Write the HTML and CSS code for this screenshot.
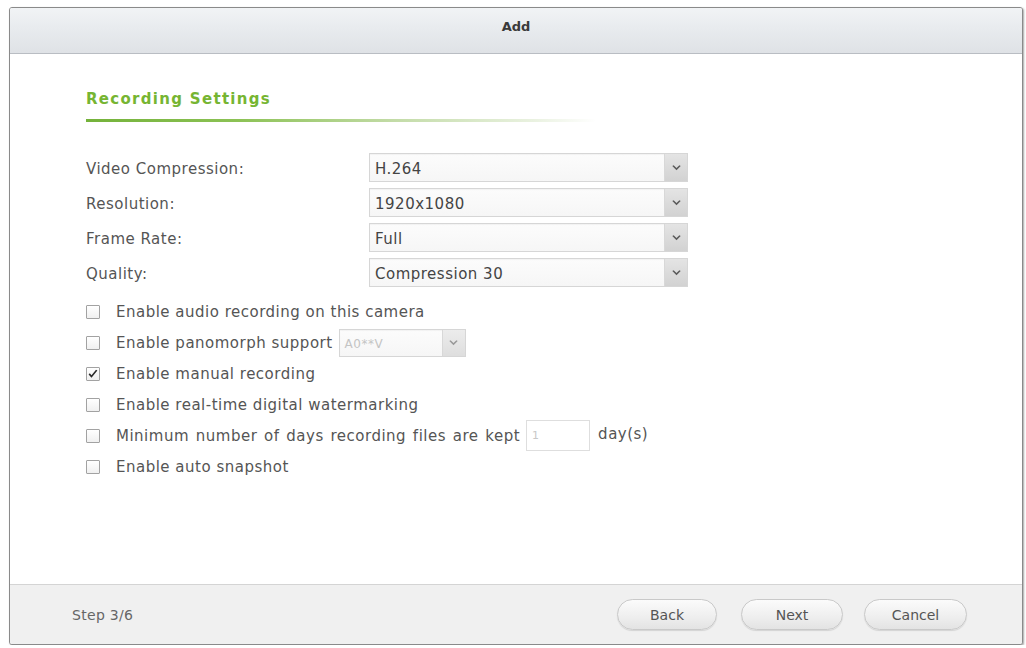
FILE: index.html
```html
<!DOCTYPE html>
<html>
<head>
<meta charset="utf-8">
<title>Add</title>
<link rel="stylesheet" href="styles.css">
</head>
<body>
<div class="dialog">
  <div class="header"><span class="title">Add</span></div>
  <div class="content">
    <div class="section-title">Recording Settings</div>
    <div class="section-line"></div>
    <div class="form">
      <div class="label">Video Compression:</div>
      <div class="select"><span class="value">H.264</span><span class="arrow"><svg width="9" height="6" viewBox="0 0 9 6"><path d="M0.3 1 L4.5 5.2 L8.7 1 L7.4 0.2 L4.5 3 L1.6 0.2 Z" fill="#5a5a5a"/></svg></span></div>
      <div class="label">Resolution:</div>
      <div class="select"><span class="value">1920x1080</span><span class="arrow"><svg width="9" height="6" viewBox="0 0 9 6"><path d="M0.3 1 L4.5 5.2 L8.7 1 L7.4 0.2 L4.5 3 L1.6 0.2 Z" fill="#5a5a5a"/></svg></span></div>
      <div class="label">Frame Rate:</div>
      <div class="select"><span class="value">Full</span><span class="arrow"><svg width="9" height="6" viewBox="0 0 9 6"><path d="M0.3 1 L4.5 5.2 L8.7 1 L7.4 0.2 L4.5 3 L1.6 0.2 Z" fill="#5a5a5a"/></svg></span></div>
      <div class="label">Quality:</div>
      <div class="select"><span class="value">Compression 30</span><span class="arrow"><svg width="9" height="6" viewBox="0 0 9 6"><path d="M0.3 1 L4.5 5.2 L8.7 1 L7.4 0.2 L4.5 3 L1.6 0.2 Z" fill="#5a5a5a"/></svg></span></div>
    </div>
    <div class="checks">
      <div class="check-row"><span class="box"></span><span class="ctext">Enable audio recording on this camera</span></div>
      <div class="check-row"><span class="box"></span><span class="ctext">Enable panomorph support</span>
        <div class="select small disabled"><span class="value">A0**V</span><span class="arrow"><svg width="9" height="6" viewBox="0 0 9 6"><path d="M0.3 1 L4.5 5.2 L8.7 1 L7.4 0.2 L4.5 3 L1.6 0.2 Z" fill="#999"/></svg></span></div>
      </div>
      <div class="check-row"><span class="box checked"><svg width="12" height="12" viewBox="0 0 12 12"><path d="M1.6 6.4 L4.5 9.8 L10.4 2.4 L9 1.8 L4.5 7.3 L2.8 5.2 Z" fill="#2a2a2a"/></svg></span><span class="ctext">Enable manual recording</span></div>
      <div class="check-row"><span class="box"></span><span class="ctext">Enable real-time digital watermarking</span></div>
      <div class="check-row"><span class="box"></span><span class="ctext wide">Minimum number of days recording files are kept</span><span class="days-input">1</span><span class="days">day(s)</span></div>
      <div class="check-row"><span class="box"></span><span class="ctext">Enable auto snapshot</span></div>
    </div>
  </div>
  <div class="footer">
    <span class="step">Step 3/6</span>
    <div class="buttons">
      <span class="btn btn-back">Back</span>
      <span class="btn btn-next">Next</span>
      <span class="btn btn-cancel">Cancel</span>
    </div>
  </div>
</div>
</body>
</html>
```
FILE: styles.css
```css
html, body {
  margin: 0;
  padding: 0;
  background: #ffffff;
}
body {
  font-family: "DejaVu Sans", "Liberation Sans", sans-serif;
  color: #555;
  padding: 7px 0 0 9px;
}
.dialog {
  box-sizing: border-box;
  width: 1014px;
  height: 638px;
  border: 1px solid #8a8a8a;
  border-radius: 3px;
  box-shadow: 1px 1px 2px rgba(0,0,0,0.35);
  display: flex;
  flex-direction: column;
  background: #fff;
  overflow: hidden;
}
.header {
  height: 46px;
  flex: none;
  border-bottom: 1px solid #b9bdc3;
  background: linear-gradient(#f1f3f5 0%, #e9ecef 40%, #dfe2e6 100%);
  text-align: center;
  box-sizing: border-box;
  padding-top: 8px;
}
.title {
  font-size: 13px;
  font-weight: bold;
  color: #3a3a3a;
  line-height: 17px;
}
.content {
  flex: 1;
  padding: 35px 0 0 76px;
}
.section-title {
  font-size: 15px;
  font-weight: bold;
  color: #76b532;
  line-height: 20px;
  letter-spacing: 1.3px;
}
.section-line {
  margin-top: 10px;
  width: 510px;
  height: 3px;
  background: linear-gradient(to right, #74b23a 0%, #8cc255 30%, #c2dba6 60%, rgba(225,236,212,0.7) 88%, rgba(255,255,255,0) 100%);
}
.form {
  margin-top: 31px;
  display: grid;
  grid-template-columns: 283px 319px;
  row-gap: 6px;
  align-items: center;
}
.label {
  font-size: 15px;
  letter-spacing: 0.5px;
  color: #555;
  padding-top: 3px;
}
.select {
  box-sizing: border-box;
  height: 29px;
  border: 1px solid #d6d6d6;
  background: linear-gradient(#fcfcfc, #f6f6f6);
  display: flex;
  align-items: center;
  box-shadow: inset 0 1px 1px rgba(0,0,0,0.04);
}
.select .value {
  flex: 1;
  padding-left: 5px;
  padding-top: 2px;
  font-size: 15px;
  letter-spacing: 0.5px;
  color: #444;
}
.select .arrow {
  width: 22px;
  align-self: stretch;
  background: linear-gradient(#e4e4e4, #d2d2d2);
  border-left: 1px solid #d8d8d8;
  display: flex;
  align-items: center;
  justify-content: center;
}
.select.small {
  width: 127px;
  height: 28px;
  margin-left: 6px;
}
.select.disabled .value {
  color: #c4c4c4;
  font-size: 12px;
}
.select.disabled .arrow {
  background: linear-gradient(#ececec, #dedede);
}
.checks {
  margin-top: 9px;
  display: flex;
  flex-direction: column;
}
.check-row {
  height: 31px;
  display: flex;
  align-items: center;
}
.box {
  box-sizing: border-box;
  width: 14px;
  height: 14px;
  border: 1px solid #a2a2a2;
  border-radius: 1px;
  background: linear-gradient(#ffffff, #f0f0f0);
  margin-right: 16px;
  flex: none;
  display: flex;
  align-items: center;
  justify-content: center;
}
.box svg {
  display: block;
}
.ctext {
  font-size: 15px;
  letter-spacing: 0.5px;
  color: #555;
}
.ctext.wide {
  word-spacing: 1.5px;
}
.days-input {
  box-sizing: border-box;
  width: 64px;
  height: 31px;
  margin-left: 6px;
  border: 1px solid #dedede;
  background: #fff;
  font-size: 11px;
  color: #c8c8c8;
  padding-left: 5px;
  display: flex;
  align-items: center;
}
.days {
  font-size: 15px;
  letter-spacing: 0.5px;
  color: #555;
  margin-left: 8px;
  margin-top: -4px;
}
.footer {
  height: 60px;
  flex: none;
  box-sizing: border-box;
  border-top: 1px solid #d4d4d4;
  background: #f0f0f0;
  display: flex;
  align-items: center;
  padding: 0 55px 0 62px;
}
.step {
  font-size: 14px;
  letter-spacing: 0.3px;
  color: #666;
  flex: 1;
}
.buttons {
  display: flex;
  align-items: center;
}
.btn {
  box-sizing: border-box;
  height: 31px;
  border: 1px solid #c9c9c9;
  border-radius: 16px;
  background: linear-gradient(#fbfbfb 0%, #eeeeee 60%, #e3e3e3 100%);
  box-shadow: 0 1px 1px rgba(0,0,0,0.12);
  font-size: 14px;
  color: #555;
  display: flex;
  align-items: center;
  justify-content: center;
}
.btn-back { width: 100px; }
.btn-next { width: 102px; margin-left: 24px; }
.btn-cancel { width: 103px; margin-left: 21px; }
```
